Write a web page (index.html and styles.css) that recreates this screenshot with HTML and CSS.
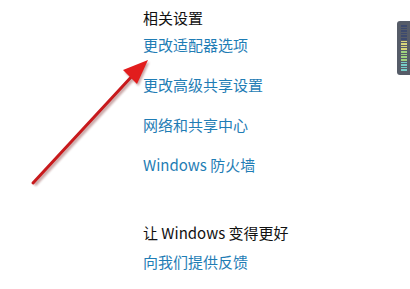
FILE: index.html
```html
<!DOCTYPE html>
<html lang="zh-CN">
<head>
    <meta charset="UTF-8">
    <title>相关设置</title>
    <link rel="stylesheet" href="styles.css">
</head>
<body>
    <div class="settings">
        <h2 class="group-title">相关设置</h2>
        <ul class="links first">
            <li><a href="#">更改适配器选项</a></li>
            <li><a href="#">更改高级共享设置</a></li>
            <li><a href="#">网络和共享中心</a></li>
            <li><a href="#">Windows 防火墙</a></li>
        </ul>

        <h2 class="group-title second">让 Windows 变得更好</h2>
        <ul class="links tight">
            <li><a href="#">向我们提供反馈</a></li>
        </ul>
    </div>

    <!-- red annotation arrow -->
    <svg class="arrow" width="410" height="289" viewBox="0 0 410 289">
        <defs>
            <filter id="shadow" x="-20%" y="-20%" width="140%" height="140%">
                <feGaussianBlur stdDeviation="1.2"/>
            </filter>
        </defs>
        <g opacity="0.35" filter="url(#shadow)" transform="translate(1.5,2)">
            <line x1="33" y1="183" x2="134" y2="74" stroke="#600" stroke-width="4"/>
            <polygon points="148,60 123,70 137,84" fill="#600"/>
        </g>
        <line x1="33" y1="183" x2="134" y2="74" stroke="#c8191c" stroke-width="3" stroke-linecap="round"/>
        <polygon points="148,60 123,70 137,84" fill="#e21d1d"/>
    </svg>

    <!-- level meter at the right edge -->
    <div class="meter">
        <span class="d"></span><span class="d"></span><span class="d"></span><span class="d"></span>
        <span class="d"></span><span class="d"></span><span class="y"></span><span class="y"></span>
        <span class="y"></span><span class="y"></span><span class="g"></span><span class="g"></span>
        <span class="g"></span><span class="g"></span><span class="c"></span><span class="c"></span>
        <span class="c"></span><span class="c"></span>
    </div>
</body>
</html>
```

FILE: styles.css
```css
* {
    margin: 0;
    padding: 0;
    box-sizing: border-box;
}

body {
    width: 410px;
    height: 289px;
    background-color: #fff;
    font-family: "Noto Sans CJK SC", "Noto Sans", sans-serif;
    font-size: 15px;
    position: relative;
    overflow: hidden;
}

.settings {
    padding: 8px 0 0 143px;
}

.group-title {
    font-size: 15px;
    font-weight: normal;
    line-height: 20px;
    color: #111;
}

.group-title.second {
    margin-top: 48px;
}

.links {
    list-style: none;
    display: flex;
    flex-direction: column;
    gap: 20px;
    margin-top: 7px;
}

.links.tight {
    margin-top: 9px;
}

.links li {
    line-height: 20px;
}

.links a {
    color: #1f7db5;
    text-decoration: none;
}

/* Arrow */
.arrow {
    position: absolute;
    top: 0;
    left: 0;
    pointer-events: none;
}

/* Meter */
.meter {
    position: absolute;
    top: 21px;
    left: 397px;
    width: 16px;
    height: 54px;
    background-color: #565c68;
    border-radius: 3px;
    padding: 4px 6px 4px 4px;
    display: flex;
    flex-direction: column;
    gap: 1px;
}

.meter span {
    display: block;
    height: 1.9px;
    width: 6px;
}

.meter .d { background-color: #3d4a6e; }
.meter .y { background-color: #d8d77a; }
.meter .g { background-color: #9fd37f; }
.meter .c { background-color: #76cdc8; }
```
